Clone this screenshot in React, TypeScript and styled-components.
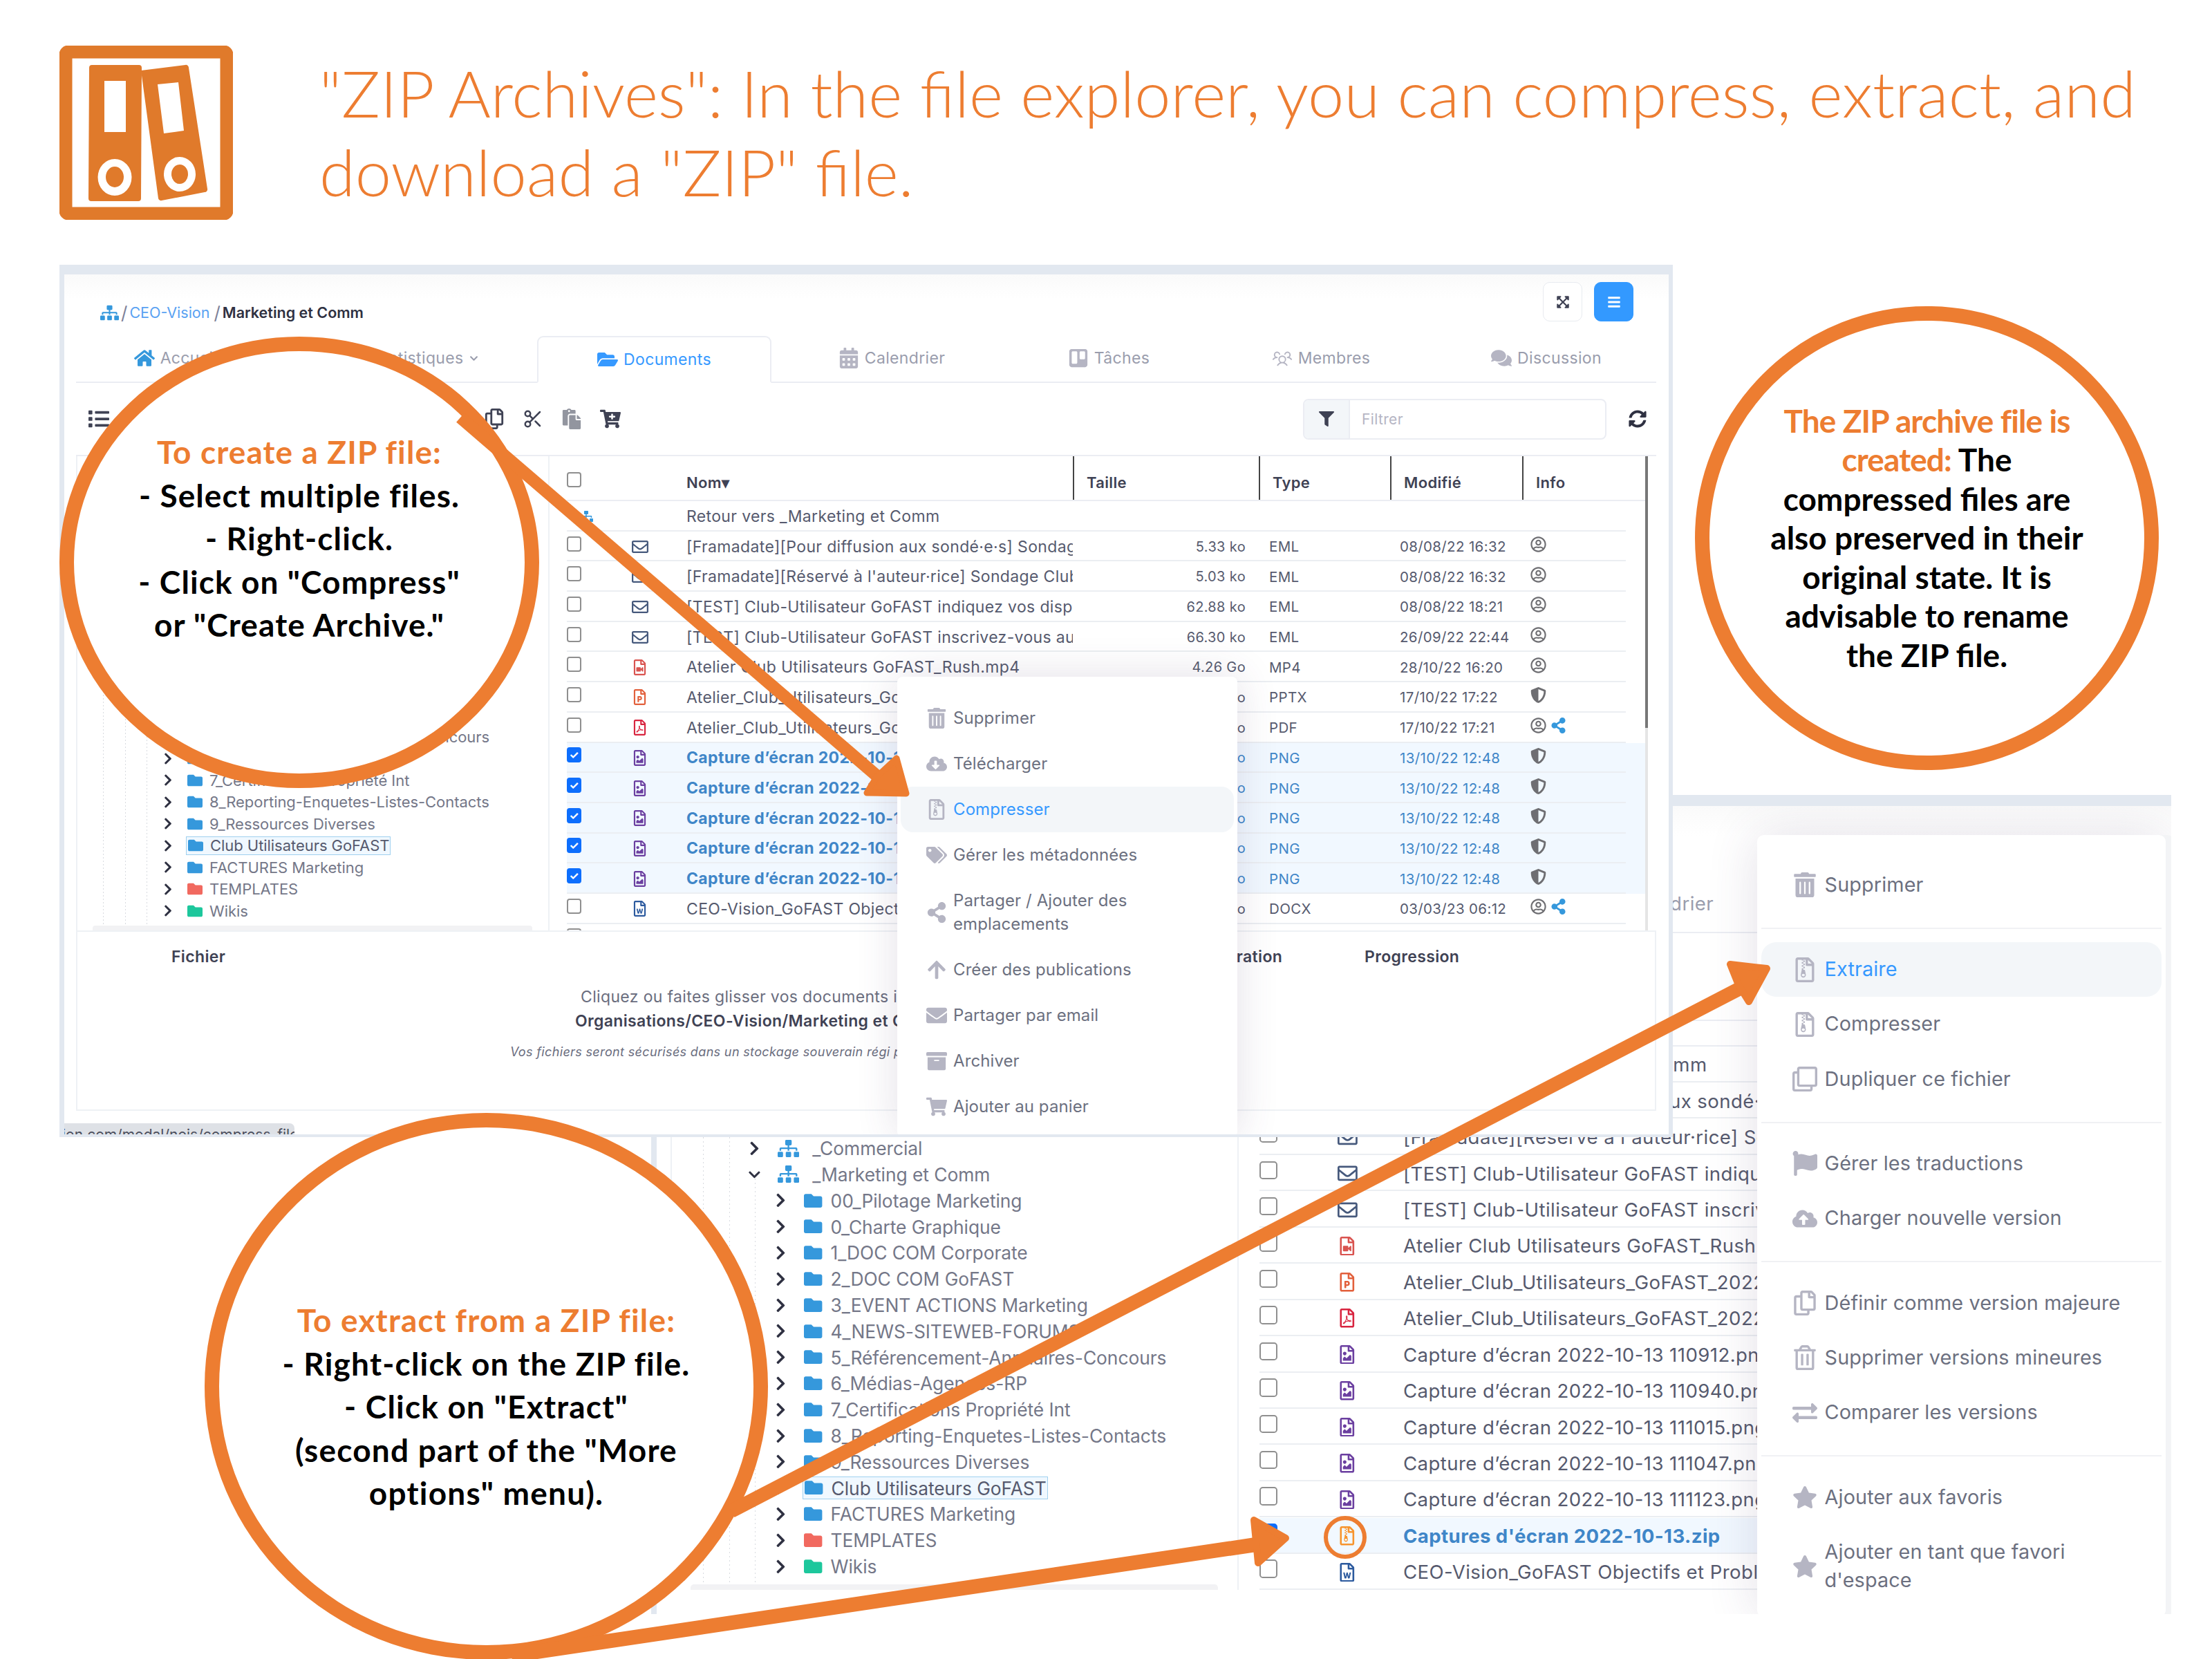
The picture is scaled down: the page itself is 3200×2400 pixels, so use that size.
import React, { FC, ReactNode } from "react";
import styled, { createGlobalStyle } from "styled-components";
import {
  FaArchive,
  FaArrowUp,
  FaBars,
  FaCalendarAlt,
  FaCartPlus,
  FaChevronDown,
  FaChevronRight,
  FaCloudDownloadAlt,
  FaCloudUploadAlt,
  FaComments,
  FaEnvelope,
  FaExchangeAlt,
  FaExpandArrowsAlt,
  FaFilter,
  FaFlag,
  FaFolder,
  FaFolderOpen,
  FaHome,
  FaList,
  FaPaste,
  FaRegClone,
  FaRegCopy,
  FaRegEnvelope,
  FaRegFileArchive,
  FaRegFileImage,
  FaRegFilePdf,
  FaRegFilePowerpoint,
  FaRegFileVideo,
  FaRegFileWord,
  FaRegTrashAlt,
  FaRegUserCircle,
  FaShareAlt,
  FaShieldAlt,
  FaShoppingCart,
  FaSitemap,
  FaStar,
  FaSyncAlt,
  FaTags,
  FaTrello,
  FaTrashAlt,
} from "react-icons/fa";
import { LuScissors } from "react-icons/lu";
import { PiUsersThree } from "react-icons/pi";

type FileRow = {
  kind: "mail" | "video" | "ppt" | "pdf" | "image" | "word" | "zip";
  name: string;
  size: string;
  type: string;
  date: string;
  info: "user" | "shield" | "shared";
  selected?: boolean;
};

type MenuEntry = { icon: ReactNode; label: ReactNode; active?: boolean; tall?: boolean };

const FILE_ICONS = {
  mail: { icon: <FaRegEnvelope />, color: "#46597c" },
  video: { icon: <FaRegFileVideo />, color: "#d9534f" },
  ppt: { icon: <FaRegFilePowerpoint />, color: "#e2603c" },
  pdf: { icon: <FaRegFilePdf />, color: "#d8243f" },
  image: { icon: <FaRegFileImage />, color: "#6b3fa0" },
  word: { icon: <FaRegFileWord />, color: "#2c5a9e" },
  zip: { icon: <FaRegFileArchive />, color: "#f7942d" },
};

const commonRows: FileRow[] = [
  { kind: "mail", name: "[Framadate][Pour diffusion aux sondé·e·s] Sondage Club-Utilisateur GoFAST", size: "5.33 ko", type: "EML", date: "08/08/22 16:32", info: "user" },
  { kind: "mail", name: "[Framadate][Réservé à l'auteur·rice] Sondage Club-Utilisateur GoFAST", size: "5.03 ko", type: "EML", date: "08/08/22 16:32", info: "user" },
  { kind: "mail", name: "[TEST] Club-Utilisateur GoFAST indiquez vos disponibilités", size: "62.88 ko", type: "EML", date: "08/08/22 18:21", info: "user" },
  { kind: "mail", name: "[TEST] Club-Utilisateur GoFAST inscrivez-vous au prochain atelier", size: "66.30 ko", type: "EML", date: "26/09/22 22:44", info: "user" },
  { kind: "video", name: "Atelier Club Utilisateurs GoFAST_Rush.mp4", size: "4.26 Go", type: "MP4", date: "28/10/22 16:20", info: "user" },
  { kind: "ppt", name: "Atelier_Club_Utilisateurs_GoFAST_2022.pptx", size: "3.12 Mo", type: "PPTX", date: "17/10/22 17:22", info: "shield" },
  { kind: "pdf", name: "Atelier_Club_Utilisateurs_GoFAST_2022.pdf", size: "1.84 Mo", type: "PDF", date: "17/10/22 17:21", info: "shared" },
];

const captureNames = ["110912", "110940", "111015", "111047", "111123"];

const topRows: FileRow[] = [
  ...commonRows,
  ...captureNames.map((id) => ({
    kind: "image" as const,
    name: `Capture d’écran 2022-10-13 ${id}.png`,
    size: "210 ko",
    type: "PNG",
    date: "13/10/22 12:48",
    info: "shield" as const,
    selected: true,
  })),
  { kind: "word", name: "CEO-Vision_GoFAST Objectifs et Problématiques.docx", size: "41 ko", type: "DOCX", date: "03/03/23 06:12", info: "shared" },
];

const bottomRows: FileRow[] = [
  ...commonRows,
  ...captureNames.map((id) => ({
    kind: "image" as const,
    name: `Capture d’écran 2022-10-13 ${id}.png`,
    size: "210 ko",
    type: "PNG",
    date: "13/10/22 12:48",
    info: "shield" as const,
  })),
  { kind: "zip", name: "Captures d'écran 2022-10-13.zip", size: "1.02 Mo", type: "ZIP", date: "13/10/22 12:50", info: "shield", selected: true },
  { kind: "word", name: "CEO-Vision_GoFAST Objectifs et Problématiques.docx", size: "41 ko", type: "DOCX", date: "03/03/23 06:12", info: "shared" },
];

const folders: { name: string; color?: string }[] = [
  { name: "00_Pilotage Marketing" },
  { name: "0_Charte Graphique" },
  { name: "1_DOC COM Corporate" },
  { name: "2_DOC COM GoFAST" },
  { name: "3_EVENT ACTIONS Marketing" },
  { name: "4_NEWS-SITEWEB-FORUMS" },
  { name: "5_Référencement-Annuaires-Concours" },
  { name: "6_Médias-Agences-RP" },
  { name: "7_Certifications Propriété Int" },
  { name: "8_Reporting-Enquetes-Listes-Contacts" },
  { name: "9_Ressources Diverses" },
  { name: "Club Utilisateurs GoFAST" },
  { name: "FACTURES Marketing" },
  { name: "TEMPLATES", color: "#f1695f" },
  { name: "Wikis", color: "#1dc79c" },
];

const compressMenu: MenuEntry[][] = [
  [
    { icon: <FaTrashAlt />, label: "Supprimer" },
    { icon: <FaCloudDownloadAlt />, label: "Télécharger" },
    { icon: <FaRegFileArchive />, label: "Compresser", active: true },
    { icon: <FaTags />, label: "Gérer les métadonnées" },
    {
      icon: <FaShareAlt />,
      label: (
        <>
          Partager / Ajouter des
          <br />
          emplacements
        </>
      ),
      tall: true,
    },
    { icon: <FaArrowUp />, label: "Créer des publications" },
    { icon: <FaEnvelope />, label: "Partager par email" },
    { icon: <FaArchive />, label: "Archiver" },
    { icon: <FaShoppingCart />, label: "Ajouter au panier" },
  ],
];

const extractMenu: MenuEntry[][] = [
  [{ icon: <FaTrashAlt />, label: "Supprimer" }],
  [
    { icon: <FaRegFileArchive />, label: "Extraire", active: true },
    { icon: <FaRegFileArchive />, label: "Compresser" },
    { icon: <FaRegClone />, label: "Dupliquer ce fichier" },
  ],
  [
    { icon: <FaFlag />, label: "Gérer les traductions" },
    { icon: <FaCloudUploadAlt />, label: "Charger nouvelle version" },
  ],
  [
    { icon: <FaRegCopy />, label: "Définir comme version majeure" },
    { icon: <FaRegTrashAlt />, label: "Supprimer versions mineures" },
    { icon: <FaExchangeAlt />, label: "Comparer les versions" },
  ],
  [
    { icon: <FaStar />, label: "Ajouter aux favoris" },
    {
      icon: <FaStar />,
      label: (
        <>
          Ajouter en tant que favori
          <br />
          d'espace
        </>
      ),
      tall: true,
    },
  ],
];

const InfoIcons: FC<{ info: FileRow["info"] }> = ({ info }) => (
  <InfoCell>
    {info === "shield" ? <FaShieldAlt /> : <FaRegUserCircle />}
    {info === "shared" && (
      <ShareMark>
        <FaShareAlt />
      </ShareMark>
    )}
  </InfoCell>
);

const FileTable: FC<{ rows: FileRow[]; headHeight: number }> = ({ rows, headHeight }) => (
  <TableArea>
    <Table>
      <HeadRow $height={headHeight}>
        <HeadCell>
          <Check />
        </HeadCell>
        <HeadCell>Nom▾</HeadCell>
        <HeadCell $rule>Taille</HeadCell>
        <HeadCell $rule>Type</HeadCell>
        <HeadCell $rule>Modifié</HeadCell>
        <HeadCell $rule>Info</HeadCell>
      </HeadRow>
      <Row>
        <BackIcon>
          <FaSitemap />
        </BackIcon>
        <span />
        <Name>Retour vers _Marketing et Comm</Name>
      </Row>
      {rows.map((row) => (
        <Row key={row.name} $selected={row.selected}>
          <div>
            <Check $checked={row.selected}>{row.selected && "✓"}</Check>
          </div>
          <FileIcon $color={FILE_ICONS[row.kind].color} $mail={row.kind === "mail"}>
            {FILE_ICONS[row.kind].icon}
          </FileIcon>
          <Name $selected={row.selected}>{row.name}</Name>
          <Size>{row.size}</Size>
          <TypeCell>{row.type}</TypeCell>
          <DateCell>{row.date}</DateCell>
          <InfoIcons info={row.info} />
        </Row>
      ))}
      <Row>
        <div>
          <Check />
        </div>
      </Row>
    </Table>
    <Scrollbar />
  </TableArea>
);

const Tree: FC = () => (
  <TreePane>
    <TreeRow $depth={0}>
      <Chevron>
        <FaChevronRight />
      </Chevron>
      <OrgIcon>
        <FaSitemap />
      </OrgIcon>
      <TreeLabel>_Commercial</TreeLabel>
    </TreeRow>
    <TreeRow $depth={0}>
      <Chevron>
        <FaChevronDown />
      </Chevron>
      <OrgIcon>
        <FaSitemap />
      </OrgIcon>
      <TreeLabel>_Marketing et Comm</TreeLabel>
    </TreeRow>
    {folders.map((folder) => (
      <TreeRow key={folder.name} $depth={1}>
        <Chevron>
          <FaChevronRight />
        </Chevron>
        {folder.name.startsWith("Club") ? (
          <SelectedFolder>
            <FolderIcon>
              <FaFolder />
            </FolderIcon>
            <TreeLabel>{folder.name}</TreeLabel>
          </SelectedFolder>
        ) : (
          <>
            <FolderIcon $color={folder.color}>
              <FaFolder />
            </FolderIcon>
            <TreeLabel>{folder.name}</TreeLabel>
          </>
        )}
      </TreeRow>
    ))}
    <TreeScroll />
  </TreePane>
);

const ContextMenu: FC<{ groups: MenuEntry[][]; left: number; top: number; edge?: boolean }> = ({
  groups,
  left,
  top,
  edge,
}) => (
  <Menu $left={left} $top={top} $edge={edge}>
    {groups.map((group, i) => (
      <MenuGroup key={i} $first={i === 0}>
        {group.map((item, j) => (
          <MenuItem key={j} $active={item.active} $tall={item.tall}>
            <MenuIcon>{item.icon}</MenuIcon>
            <MenuLabel>{item.label}</MenuLabel>
          </MenuItem>
        ))}
      </MenuGroup>
    ))}
  </Menu>
);

const Screen: FC<{
  rows: FileRow[];
  barHeight: number;
  headHeight: number;
  scale: number;
  height: number;
  children: ReactNode;
}> = ({ rows, barHeight, headHeight, scale, height, children }) => (
  <ScreenBox $scale={scale} $height={height}>
    <TopBar $height={barHeight}>
      <Crumbs>
        <CrumbIcon>
          <FaSitemap />
        </CrumbIcon>
        <CrumbSep>/</CrumbSep>
        <CrumbLink>CEO-Vision</CrumbLink>
        <CrumbSep>/</CrumbSep>
        <CrumbCurrent>Marketing et Comm</CrumbCurrent>
      </Crumbs>
      <SquareButton>
        <FaExpandArrowsAlt />
      </SquareButton>
      <SquareButton $primary>
        <FaBars />
      </SquareButton>
    </TopBar>
    <Tabs>
      <Tab $w={288}>
        <TabIcon $color="#3598dc">
          <FaHome />
        </TabIcon>
        Accueil
      </Tab>
      <Tab $w={379} $shift={56}>
        Statistiques
        <FaChevronDown size={13} />
      </Tab>
      <Tab $w={339} $active>
        <TabIcon $color="#3699ff">
          <FaFolderOpen />
        </TabIcon>
        Documents
      </Tab>
      <Tab $w={348}>
        <TabIcon>
          <FaCalendarAlt />
        </TabIcon>
        Calendrier
      </Tab>
      <Tab $w={280}>
        <TabIcon>
          <FaTrello />
        </TabIcon>
        Tâches
      </Tab>
      <Tab $w={334}>
        <TabIcon>
          <PiUsersThree />
        </TabIcon>
        Membres
      </Tab>
      <Tab $w={318}>
        <TabIcon>
          <FaComments />
        </TabIcon>
        Discussion
      </Tab>
    </Tabs>
    <Toolbar>
      <ToolIcon>
        <FaList />
      </ToolIcon>
      <ToolCluster>
        <ToolIcon>
          <FaRegCopy />
        </ToolIcon>
        <ToolIcon>
          <LuScissors />
        </ToolIcon>
        <ToolIcon $muted>
          <FaPaste />
        </ToolIcon>
        <ToolIcon>
          <FaCartPlus />
        </ToolIcon>
      </ToolCluster>
      <FilterGroup>
        <FilterAddon>
          <FaFilter />
        </FilterAddon>
        <FilterInput>Filtrer</FilterInput>
      </FilterGroup>
      <Refresh>
        <FaSyncAlt />
      </Refresh>
    </Toolbar>
    <Split>
      <Tree />
      <FileTable rows={rows} headHeight={headHeight} />
    </Split>
    {children}
  </ScreenBox>
);

const App: FC = () => (
  <Slide>
    <GlobalStyle />
    <Header>
      <Logo viewBox="0 0 251 252">
        <rect x="9" y="9" width="233" height="234" rx="4" fill="none" stroke="#e07a2b" strokeWidth="19" />
        <path
          fill="#e07a2b"
          fillRule="evenodd"
          d="M47 28h68a4 4 0 0 1 4 4l-1 189a4 4 0 0 1-4 4H46a4 4 0 0 1-4-4l1-189a4 4 0 0 1 4-4ZM65 51v74h31V51H65Zm15 113a24 26 0 1 0 0 53 24 26 0 1 0 0-53Zm0 11a13 15 0 1 1 0 30 13 15 0 1 1 0-30Z"
        />
        <path
          fill="#e07a2b"
          fillRule="evenodd"
          d="M118 36l64-8a4 4 0 0 1 5 4l27 175a4 4 0 0 1-4 5l-62 12a4 4 0 0 1-5-3L118 36Zm24 20l9 71 29-4-8-70-30 3Zm32 105a23 25 0 1 0 0 50 23 25 0 1 0 0-50Zm0 11a12 14 0 1 1 0 28 12 14 0 1 1 0-28Z"
        />
      </Logo>
      <Title>
        "ZIP Archives": In the file explorer, you can compress, extract, and
        <br />
        download a "ZIP" file.
      </Title>
    </Header>

    <ShotFrame $left={942} $top={1150} $width={2199} $height={1185} $layer={1}>
      <Screen rows={bottomRows} barHeight={85} headHeight={31} scale={1.2} height={1000}>
        <ContextMenu groups={extractMenu} left={1327} top={35} edge />
      </Screen>
    </ShotFrame>

    <ShotFrame $left={86} $top={383} $width={2334} $height={1262} $layer={2}>
      <Screen rows={topRows} barHeight={89} headHeight={65} scale={1} height={1262}>
        <Upload>
          <UploadHead>
            <UploadTitle $width={1492}>Fichier</UploadTitle>
            <UploadTitle $width={234}>Expiration</UploadTitle>
            <UploadTitle>Progression</UploadTitle>
          </UploadHead>
          <DropLine $indent={728}>Cliquez ou faites glisser vos documents ici</DropLine>
          <DropLine $indent={720} $strong>
            Organisations/CEO-Vision/Marketing et Comm
          </DropLine>
          <DropLine $indent={626} $note>
            Vos fichiers seront sécurisés dans un stockage souverain régi par le droit français
          </DropLine>
        </Upload>
        <UrlHint>
          <span>ion.com/modal/nojs/compress-files</span>
        </UrlHint>
        <ContextMenu groups={compressMenu} left={1205} top={582} />
      </Screen>
    </ShotFrame>

    <Ring $left={86} $top={487} $width={694} $height={653} $pad="2px 0 70px">
      <RingLines $tracking={1.1}>
        <Lead>To create a ZIP file:</Lead>
        <Line>- Select multiple files.</Line>
        <Line>- Right-click.</Line>
        <Line>- Click on "Compress"</Line>
        <Line>or "Create Archive."</Line>
      </RingLines>
    </Ring>

    <Ring $left={2452} $top={443} $width={671} $height={671} $pad="0">
      <RingLines $lineHeight={56.4}>
        <Lead $tight>The ZIP archive file is</Lead>
        <Line>
          <Lead as="span" $tight>
            created:
          </Lead>{" "}
          The
        </Line>
        <Line>compressed files are</Line>
        <Line>also preserved in their</Line>
        <Line>original state. It is</Line>
        <Line>advisable to rename</Line>
        <Line>the ZIP file.</Line>
      </RingLines>
    </Ring>

    <Ring $left={296} $top={1610} $width={815} $height={791} $pad="60px 0 0">
      <RingLines $tracking={1.2}>
        <Lead>To extract from a ZIP file:</Lead>
        <Line>- Right-click on the ZIP file.</Line>
        <Line>- Click on "Extract"</Line>
        <Line>(second part of the "More</Line>
        <Line>options" menu).</Line>
      </RingLines>
    </Ring>

    <Arrows viewBox="0 0 3200 2400">
      <g fill="#ed7d31" stroke="#ed7d31" strokeLinejoin="round">
        <path d="M666 604L1268 1122" strokeWidth="18" />
        <path d="M1297 1097L1311 1148L1254 1147L1268 1124Z" strokeWidth="9" />
        <path d="M1058 2186L2515 1431" strokeWidth="20" />
        <path d="M2503 1395L2556 1401L2530 1449L2515 1425Z" strokeWidth="10" />
        <path d="M740 2395L1820 2234" strokeWidth="21" />
        <path d="M1814 2199L1860 2225L1820 2261Z" strokeWidth="10" />
        <ellipse cx="1946" cy="2224" rx="28" ry="28" fill="none" strokeWidth="6" />
      </g>
    </Arrows>
  </Slide>
);

export default App;

const GlobalStyle = createGlobalStyle`
  html,
  body {
    margin: 0;
    background: #fff;
  }
  * {
    box-sizing: border-box;
  }
`;

const Slide = styled.div`
  position: relative;
  width: 3200px;
  height: 2400px;
  overflow: hidden;
  background: #fff;
  font-family: Inter, "Liberation Sans", sans-serif;
`;

const Header = styled.header`
  display: flex;
  align-items: flex-start;
  padding: 66px 0 0 86px;
`;

const Logo = styled.svg`
  width: 251px;
  height: 252px;
  flex: none;
`;

const Title = styled.h1`
  margin: 12px 0 0 125px;
  font-family: Lato, sans-serif;
  font-size: 92px;
  line-height: 114px;
  font-weight: 300;
  color: #ed7d31;
  white-space: nowrap;
  transform: scaleX(1.02);
  transform-origin: left center;
`;

const ShotFrame = styled.div<{ $left: number; $top: number; $width: number; $height: number; $layer: number }>`
  position: absolute;
  left: ${(p) => p.$left}px;
  top: ${(p) => p.$top}px;
  width: ${(p) => p.$width}px;
  height: ${(p) => p.$height}px;
  overflow: hidden;
  z-index: ${(p) => p.$layer};
  background: #fff;
`;

const ScreenBox = styled.div<{ $scale: number; $height: number }>`
  position: relative;
  zoom: ${(p) => p.$scale};
  width: 2334px;
  height: ${(p) => p.$height}px;
  overflow: hidden;
  border-style: solid;
  border-color: #e2e8f0;
  border-width: 14px 6px 4px 7px;
  background: linear-gradient(#fafafa, #fff 36px);
  font-size: 23px;
  letter-spacing: 0.35px;
  color: #565a6e;
`;

const TopBar = styled.div<{ $height: number }>`
  display: flex;
  align-items: flex-start;
  gap: 17px;
  height: ${(p) => p.$height}px;
  padding: 11px 51px 0 52px;
`;

const Crumbs = styled.div`
  display: flex;
  align-items: center;
  flex: 1;
  height: 62px;
  margin-top: 13px;
  font-size: 21.5px;
  letter-spacing: 0;
`;

const CrumbIcon = styled.span`
  display: flex;
  color: #3598dc;
  font-size: 27px;
`;

const CrumbSep = styled.span`
  margin: 0 3px;
  font-size: 26px;
  color: #7e8299;
`;

const CrumbLink = styled.span`
  color: #5aa2f2;
  margin-right: 3px;
`;

const CrumbCurrent = styled.span`
  color: #2f3142;
  font-weight: 600;
`;

const SquareButton = styled.div<{ $primary?: boolean }>`
  display: flex;
  align-items: center;
  justify-content: center;
  width: 57px;
  height: 57px;
  border-radius: 10px;
  font-size: 20px;
  color: ${(p) => (p.$primary ? "#fff" : "#3f4254")};
  background: ${(p) => (p.$primary ? "#3399ff" : "#fff")};
  border: 1px solid ${(p) => (p.$primary ? "#3399ff" : "#e8ebf0")};
`;

const Tabs = styled.nav`
  display: flex;
  align-items: flex-end;
  height: 68px;
  margin: 0 18px 0 17px;
  border-bottom: 2px solid #ebedf3;
`;

const Tab = styled.div<{ $w: number; $active?: boolean; $shift?: number }>`
  display: flex;
  align-items: center;
  justify-content: center;
  gap: 8px;
  flex: none;
  width: ${(p) => p.$w}px;
  height: 68px;
  padding-left: ${(p) => p.$shift ?? 0}px;
  color: ${(p) => (p.$active ? "#3699ff" : "#9a9dad")};
  background: #fff;
  ${(p) =>
    p.$active &&
    `border: 2px solid #ebedf3; border-bottom: 2px solid #fff; border-radius: 9px 9px 0 0; margin-bottom: -2px;`}
`;

const TabIcon = styled.span<{ $color?: string }>`
  display: flex;
  font-size: 30px;
  color: ${(p) => p.$color ?? "#b5b5c3"};
`;

const Toolbar = styled.div`
  display: flex;
  align-items: center;
  height: 106px;
  margin: 0 18px 0 17px;
  padding-left: 18px;
  border-bottom: 2px solid #ebedf3;
`;

const ToolIcon = styled.span<{ $muted?: boolean }>`
  display: flex;
  width: 30px;
  font-size: 30px;
  color: ${(p) => (p.$muted ? "#92959f" : "#3f4254")};
`;

const ToolCluster = styled.div`
  display: flex;
  gap: 26px;
  margin-left: 542px;
`;

const FilterGroup = styled.div`
  display: flex;
  margin-left: 987px;
  width: 439px;
  height: 59px;
  border: 2px solid #ebedf3;
  border-radius: 8px;
  overflow: hidden;
`;

const FilterAddon = styled.div`
  display: flex;
  align-items: center;
  justify-content: center;
  width: 66px;
  background: #f3f6f9;
  border-right: 2px solid #ebedf3;
  color: #3f4254;
  font-size: 22px;
`;

const FilterInput = styled.div`
  display: flex;
  align-items: center;
  padding-left: 17px;
  color: #b5b5c3;
  font-size: 21px;
`;

const Refresh = styled.span`
  display: flex;
  margin-left: 32px;
  font-size: 26px;
  color: #2f3142;
`;

const Split = styled.div`
  display: flex;
  height: 686px;
  margin-left: 17px;
`;

const TreePane = styled.div`
  position: relative;
  flex: none;
  width: 685px;
  padding-top: 138px;
  overflow: hidden;
  border-left: 2px solid #eef1f5;
  border-right: 2px solid #eef1f5;
  background-image: repeating-linear-gradient(#d8dbe0 0 2px, transparent 2px 5px),
    repeating-linear-gradient(#d8dbe0 0 2px, transparent 2px 5px),
    repeating-linear-gradient(#d8dbe0 0 2px, transparent 2px 5px);
  background-size: 1px 100%, 1px 100%, 1px 100%;
  background-position: 37px 0, 69px 0, 100px 190px;
  background-repeat: no-repeat;
`;

const TreeRow = styled.div<{ $depth: number }>`
  display: flex;
  align-items: center;
  height: 31.5px;
  padding-left: ${(p) => (p.$depth === 0 ? 92 : 124)}px;
  font-size: 22px;
  letter-spacing: -0.05px;
  white-space: nowrap;
  color: #747788;
`;

const Chevron = styled.span`
  display: flex;
  flex: none;
  width: 14px;
  margin-right: 21px;
  font-size: 19px;
  color: #2f3142;
`;

const OrgIcon = styled.span`
  display: flex;
  width: 27px;
  margin-right: 15px;
  font-size: 26px;
  color: #3598dc;
`;

const FolderIcon = styled.span<{ $color?: string }>`
  display: flex;
  width: 22px;
  margin-right: 10px;
  font-size: 22px;
  color: ${(p) => p.$color ?? "#3598dc"};
`;

const SelectedFolder = styled.div`
  display: flex;
  align-items: center;
  width: 296px;
  height: 27px;
  margin-left: -2px;
  padding-left: 2px;
  background: #f0f8ff;
  border: 1px solid #9fd0ef;
  color: #565a6e;
`;

const TreeLabel = styled.span``;

const TreeScroll = styled.div`
  position: absolute;
  left: 22px;
  bottom: 0;
  width: 636px;
  height: 7px;
  background: #f2f2f4;
  border-radius: 4px 4px 0 0;
`;

const TableArea = styled.div`
  display: flex;
  margin-left: 25px;
  overflow: hidden;
`;

const Table = styled.div`
  width: 1560px;
  flex: none;
`;

const Scrollbar = styled.div`
  width: 4px;
  height: 100%;
  flex: none;
  background: linear-gradient(#777 0 393px, #e5e5e5 393px);
`;

const HeadRow = styled.div<{ $height: number }>`
  display: grid;
  grid-template-columns: 173px 559px 269px 190px 191px 178px;
  height: ${(p) => p.$height}px;
  border-bottom: 2px solid #ebedf3;
  overflow: hidden;
`;

const HeadCell = styled.div<{ $rule?: boolean }>`
  display: flex;
  align-items: center;
  padding: 12px 0 0 ${(p) => (p.$rule ? 18 : 0)}px;
  border-left: ${(p) => (p.$rule ? "2px solid #444" : "none")};
  font-weight: 600;
  font-size: 22px;
  color: #3f4254;
`;

const Row = styled.div<{ $selected?: boolean }>`
  display: grid;
  grid-template-columns: 94px 79px 559px 250px 223px 189px 166px;
  align-items: center;
  height: 43.7px;
  background: linear-gradient(#ebeef2, #ebeef2) left bottom / 1532px 2px no-repeat,
    ${(p) => (p.$selected ? "#f1f8ff" : "transparent")};
  color: ${(p) => (p.$selected ? "#3f86c8" : "inherit")};
`;

const Check = styled.span<{ $checked?: boolean }>`
  display: flex;
  align-items: center;
  justify-content: center;
  width: 21px;
  height: 22px;
  margin-bottom: 8px;
  border-radius: 4px;
  border: 2px solid ${(p) => (p.$checked ? "#0d6efd" : "#8f8f8f")};
  background: ${(p) => (p.$checked ? "#0d6efd" : "#fff")};
  color: #fff;
  font-size: 16px;
  font-weight: 700;
  line-height: 1;
`;

const BackIcon = styled.span`
  display: flex;
  padding-left: 18px;
  color: #3598dc;
  font-size: 20px;
`;

const FileIcon = styled.span<{ $color: string; $mail?: boolean }>`
  display: flex;
  font-size: ${(p) => (p.$mail ? 24 : 23)}px;
  color: ${(p) => p.$color};
`;

const Name = styled.span<{ $selected?: boolean }>`
  overflow: hidden;
  white-space: nowrap;
  font-weight: ${(p) => (p.$selected ? 700 : 400)};
`;

const Size = styled.span`
  text-align: right;
  font-size: 20px;
`;

const TypeCell = styled.span`
  padding-left: 34px;
  font-size: 20.5px;
`;

const DateCell = styled.span`
  font-size: 20.5px;
  white-space: nowrap;
`;

const InfoCell = styled.span`
  display: flex;
  align-items: center;
  gap: 6px;
  margin-bottom: 6px;
  font-size: 23px;
  color: #6e6e72;
`;

const ShareMark = styled.span`
  display: flex;
  color: #3598dc;
`;

const Upload = styled.section`
  height: 261px;
  margin: 0 18px 18px 17px;
  padding-top: 22px;
  border: 2px solid #eef1f5;
  background: #fff;
`;

const UploadHead = styled.div`
  display: flex;
  margin-bottom: 26px;
  padding-left: 136px;
`;

const UploadTitle = styled.span<{ $width?: number }>`
  width: ${(p) => (p.$width ? `${p.$width}px` : "auto")};
  font-weight: 600;
  color: #3f4254;
`;

const DropLine = styled.div<{ $indent: number; $strong?: boolean; $note?: boolean }>`
  margin-left: ${(p) => p.$indent}px;
  height: ${(p) => (p.$note ? 54 : 35)}px;
  display: flex;
  align-items: center;
  white-space: nowrap;
  font-weight: ${(p) => (p.$strong ? 600 : 400)};
  font-style: ${(p) => (p.$note ? "italic" : "normal")};
  font-size: ${(p) => (p.$note ? 18 : 23)}px;
  color: ${(p) => (p.$strong ? "#3f4254" : "#6a6d7e")};
`;

const UrlHint = styled.div`
  width: 340px;
  height: 18px;
  margin-left: -7px;
  padding: 4px 0 0 4px;
  overflow: hidden;
  white-space: nowrap;
  background: #dee1e6;
  border-radius: 0 7px 0 0;
  font-size: 21px;
  letter-spacing: 0;
  color: #4a4d5c;
  text-align: right;
`;

const Menu = styled.div<{ $left: number; $top: number; $edge?: boolean }>`
  position: absolute;
  left: ${(p) => p.$left}px;
  top: ${(p) => p.$top}px;
  width: 492px;
  padding: 27px 5px 11px;
  background: #fff;
  border-radius: 8px;
  box-shadow: ${(p) => (p.$edge ? "10px 0 0 #f3f4f6, " : "")}0 0 60px rgba(82, 63, 105, 0.16);
`;

const MenuGroup = styled.div<{ $first: boolean }>`
  ${(p) =>
    !p.$first &&
    `margin-top: 18.5px; padding-top: 16px; border-top: 2px solid #f0f1f4;`}
  display: flex;
  flex-direction: column;
`;

const MenuItem = styled.div<{ $active?: boolean; $tall?: boolean }>`
  display: flex;
  align-items: center;
  min-height: ${(p) => (p.$tall ? 99 : 66)}px;
  padding: 16px 20px 16px 0;
  border-radius: 18px;
  background: ${(p) => (p.$active ? "#f3f6f9" : "transparent")};
  color: ${(p) => (p.$active ? "#3699ff" : "#6c7080")};
`;

const MenuIcon = styled.span`
  display: flex;
  justify-content: center;
  flex: none;
  width: 76px;
  padding-left: 28px;
  font-size: 30px;
  color: #b5b5c3;
`;

const MenuLabel = styled.span`
  line-height: 34px;
  font-size: 24px;
  letter-spacing: 0.1px;
`;

const Ring = styled.div<{ $left: number; $top: number; $width: number; $height: number; $pad: string }>`
  position: absolute;
  z-index: 3;
  left: ${(p) => p.$left}px;
  top: ${(p) => p.$top}px;
  width: ${(p) => p.$width}px;
  height: ${(p) => p.$height}px;
  display: flex;
  align-items: center;
  justify-content: center;
  padding: ${(p) => p.$pad};
  border: 21px solid #ed7d31;
  border-radius: 50%;
  background: #fff;
`;

const RingLines = styled.div<{ $lineHeight?: number; $tracking?: number }>`
  font-family: Lato, sans-serif;
  font-weight: 700;
  font-size: 46px;
  line-height: ${(p) => p.$lineHeight ?? 62.5}px;
  letter-spacing: ${(p) => p.$tracking ?? 0}px;
  text-align: center;
  white-space: nowrap;
  color: #000;
`;

const Lead = styled.div<{ $tight?: boolean }>`
  color: #ed7d31;
  letter-spacing: ${(p) => (p.$tight ? "-0.9px" : "inherit")};
`;

const Line = styled.div``;

const Arrows = styled.svg`
  position: absolute;
  left: 0;
  top: 0;
  width: 3200px;
  height: 2400px;
  z-index: 4;
  pointer-events: none;
`;
